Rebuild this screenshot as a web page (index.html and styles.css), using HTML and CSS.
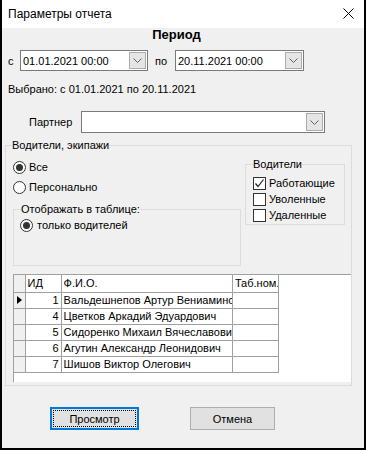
FILE: index.html
```html
<!DOCTYPE html>
<html lang="ru">
<head>
    <meta charset="UTF-8">
    <title>Параметры отчета</title>
    <link rel="stylesheet" href="styles.css">
</head>
<body>
    <div class="window">
        <div class="titlebar">
            <span class="title">Параметры отчета</span>
            <svg class="close" width="11" height="11" viewBox="0 0 11 11">
                <path d="M0.5 0.5 L10.5 10.5 M10.5 0.5 L0.5 10.5" stroke="#000" stroke-width="1" fill="none"/>
            </svg>
        </div>

        <div class="dialog">
            <div class="heading">Период</div>

            <div class="period-row">
                <span class="lbl-from">с</span>
                <div class="combo combo-from">
                    <span class="combo-text">01.01.2021 00:00</span>
                    <span class="combo-btn"><svg width="9" height="5" viewBox="0 0 9 5"><path d="M0.5 0.5 L4.5 4.5 L8.5 0.5" stroke="#606060" fill="none"/></svg></span>
                </div>
                <span class="lbl-to">по</span>
                <div class="combo combo-to">
                    <span class="combo-text">20.11.2021 00:00</span>
                    <span class="combo-btn"><svg width="9" height="5" viewBox="0 0 9 5"><path d="M0.5 0.5 L4.5 4.5 L8.5 0.5" stroke="#606060" fill="none"/></svg></span>
                </div>
            </div>

            <div class="selected">Выбрано: с 01.01.2021 по 20.11.2021</div>

            <div class="partner-row">
                <span class="lbl-partner">Партнер</span>
                <div class="combo combo-partner">
                    <span class="combo-text"></span>
                    <span class="combo-btn"><svg width="9" height="5" viewBox="0 0 9 5"><path d="M0.5 0.5 L4.5 4.5 L8.5 0.5" stroke="#606060" fill="none"/></svg></span>
                </div>
            </div>

            <fieldset class="group group-crews">
                <legend>Водители, экипажи</legend>
                <div class="crews-top">
                    <div class="crews-left">
                        <div class="radio-row"><span class="radio checked"></span><span class="radio-label">Все</span></div>
                        <div class="radio-row"><span class="radio"></span><span class="radio-label">Персонально</span></div>
                        <fieldset class="group group-show">
                            <legend>Отображать в таблице:</legend>
                            <div class="radio-row small"><span class="radio checked"></span><span class="radio-label">только водителей</span></div>
                        </fieldset>
                    </div>
                    <fieldset class="group group-drivers">
                        <legend>Водители</legend>
                        <div class="check-row"><span class="checkbox checked"><svg width="11" height="11" viewBox="0 0 11 11"><path d="M1.5 5.5 L4 8.5 L9.5 1.5" stroke="#222" stroke-width="1.2" fill="none"/></svg></span><span>Работающие</span></div>
                        <div class="check-row"><span class="checkbox"></span><span>Уволенные</span></div>
                        <div class="check-row"><span class="checkbox"></span><span>Удаленные</span></div>
                    </fieldset>
                </div>

                <div class="grid">
                    <table>
                        <colgroup>
                            <col class="c-ind"><col class="c-id"><col class="c-name"><col class="c-tab">
                        </colgroup>
                        <tr class="head">
                            <td class="ind"></td><td>ИД</td><td>Ф.И.О.</td><td>Таб.ном.</td>
                        </tr>
                        <tr>
                            <td class="ind"><span class="pointer"></span></td><td class="num">1</td><td>Вальдешнепов Артур Вениаминович</td><td></td>
                        </tr>
                        <tr>
                            <td class="ind"></td><td class="num">4</td><td>Цветков Аркадий Эдуардович</td><td></td>
                        </tr>
                        <tr>
                            <td class="ind"></td><td class="num">5</td><td>Сидоренко Михаил Вячеславович</td><td></td>
                        </tr>
                        <tr>
                            <td class="ind"></td><td class="num">6</td><td>Агутин Александр Леонидович</td><td></td>
                        </tr>
                        <tr>
                            <td class="ind"></td><td class="num">7</td><td>Шишов Виктор Олегович</td><td></td>
                        </tr>
                    </table>
                </div>
            </fieldset>

            <div class="buttons">
                <div class="btn btn-default"><span class="focus">Просмотр</span></div>
                <div class="btn btn-cancel">Отмена</div>
            </div>
        </div>
    </div>
</body>
</html>
```

FILE: styles.css
```css
* {
    margin: 0;
    padding: 0;
    box-sizing: border-box;
}

body {
    font-family: 'Liberation Sans', Arial, sans-serif;
    font-size: 11px;
    color: #000;
    background: #000;
}

.window {
    width: 366px;
    height: 450px;
    border-left: 2px solid #000;
    border-right: 2px solid #000;
    border-bottom: 2px solid #000;
    background: #f0f0f0;
    display: flex;
    flex-direction: column;
}

.titlebar {
    height: 28px;
    background: #fff;
    display: flex;
    align-items: center;
    justify-content: space-between;
    padding-left: 6px;
    padding-right: 10px;
}

.title {
    font-size: 12px;
}

.close {
    margin-top: -1px;
}

.dialog {
    flex: 1;
    display: flex;
    flex-direction: column;
}

.heading {
    font-size: 13px;
    font-weight: bold;
    line-height: 12px;
    text-align: center;
    padding-right: 13px;
    margin-top: 1px;
}

.period-row {
    display: flex;
    align-items: center;
    margin-top: 9px;
    padding-left: 6px;
    height: 21px;
}

.lbl-from {
    width: 12px;
}

.lbl-to {
    width: 27px;
    padding-left: 7px;
}

.combo {
    height: 21px;
    background: #fff;
    border: 1px solid #7a7a7a;
    display: flex;
    align-items: center;
    justify-content: space-between;
}

.combo-from {
    width: 128px;
}

.combo-to {
    width: 129px;
}

.combo-partner {
    width: 244px;
    height: 22px;
}

.combo-text {
    padding-left: 2px;
}

.combo-btn {
    width: 17px;
    align-self: stretch;
    margin: 1px;
    background: #e5e5e5;
    border: 1px solid #adadad;
    display: flex;
    align-items: center;
    justify-content: center;
}

.selected {
    margin-top: 11px;
    padding-left: 6px;
    line-height: 14px;
}

.partner-row {
    display: flex;
    align-items: center;
    margin-top: 15px;
    padding-left: 27px;
}

.lbl-partner {
    width: 52px;
}

.group {
    border: 1px solid #dcdcdc;
    min-width: 0;
}

.group legend {
    line-height: 14px;
    padding: 0;
}

.group-crews {
    margin: 5px 12px 0 3px;
    padding: 5px 0 3px 7px;
}

.group-crews > legend {
    margin-left: -1px;
}

.crews-top {
    display: flex;
    align-items: flex-start;
    gap: 4px;
}

.crews-left {
    width: 228px;
}

.radio-row {
    height: 20px;
    display: flex;
    align-items: center;
}

.radio-row.small {
    height: 18px;
}

.radio {
    width: 13px;
    height: 13px;
    border: 1px solid #333;
    border-radius: 50%;
    background: #fff;
    display: flex;
    align-items: center;
    justify-content: center;
}

.radio.checked::after {
    content: "";
    width: 7px;
    height: 7px;
    border-radius: 50%;
    background: #333;
}

.radio-label {
    margin-left: 3px;
}

.group-show {
    margin-top: 5px;
    padding: 0 0 31px 6px;
}

.group-show legend {
    margin-left: 1px;
}

.group-show .radio-label {
    margin-left: 4px;
}

.group-drivers {
    width: 100px;
    padding: 4px 0 1px 7px;
}

.check-row {
    height: 16px;
    display: flex;
    align-items: center;
    gap: 3px;
}

.checkbox {
    width: 13px;
    height: 13px;
    border: 1px solid #333;
    background: #fff;
    display: flex;
    align-items: center;
    justify-content: center;
}

.grid {
    margin-top: 8px;
    height: 108px;
    background: #fff;
    border-top: 1px solid #a0a0a0;
    border-left: 1px solid #a0a0a0;
}

.grid table {
    border-collapse: collapse;
    table-layout: fixed;
    width: 265px;
}

.c-ind { width: 11px; }
.c-id { width: 36px; }
.c-name { width: 171px; }
.c-tab { width: 46px; }

.grid td {
    height: 16px;
    padding: 0 0 0 2px;
    border-right: 1px solid #a0a0a0;
    border-bottom: 1px solid #a0a0a0;
    white-space: nowrap;
    overflow: hidden;
    line-height: 15px;
}

.grid tr.head td {
    height: 17px;
}

.grid td.ind {
    background: #f0f0f0;
    padding: 0;
}

.grid td.num {
    text-align: right;
    padding: 0 2px 0 0;
}

.pointer {
    display: block;
    margin-left: 3px;
    width: 0;
    height: 0;
    border-top: 4px solid transparent;
    border-bottom: 4px solid transparent;
    border-left: 5px solid #000;
}

.buttons {
    display: flex;
    margin-top: 21px;
}

.btn {
    height: 23px;
    background: #e1e1e1;
    border: 1px solid #adadad;
    display: flex;
    align-items: center;
    justify-content: center;
}

.btn-default {
    width: 89px;
    margin-left: 48px;
    border: 2px solid #0078d7;
    padding: 1px;
}

.btn-default .focus {
    flex: 1;
    align-self: stretch;
    border: 1px dotted #000;
    display: flex;
    align-items: center;
    justify-content: center;
}

.btn-cancel {
    width: 85px;
    margin-left: 51px;
}
```
